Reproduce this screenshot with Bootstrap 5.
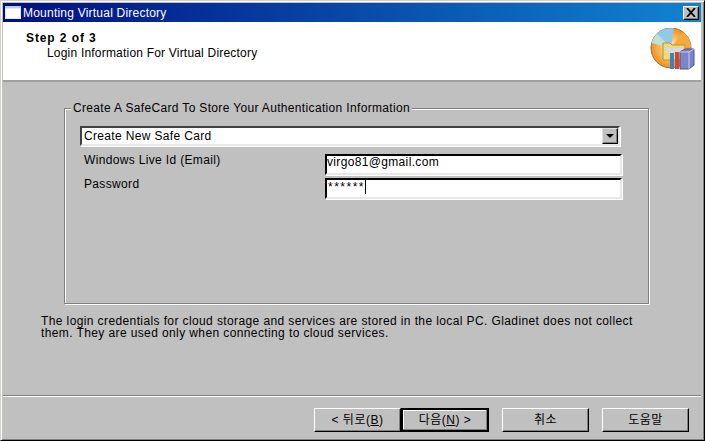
<!DOCTYPE html>
<html lang="en"><head><meta charset="utf-8"><title>Mounting Virtual Directory</title>
<link href="https://cdn.jsdelivr.net/npm/bootstrap@5.3.0/dist/css/bootstrap.min.css" rel="stylesheet">
<style>
html,body{width:705px;height:441px;overflow:hidden;margin:0;background:#c0c0c0}
body{font-family:"Liberation Sans","Noto Sans CJK KR",sans-serif;font-size:12px;color:#000;letter-spacing:.34px;line-height:14px}
.wframe{height:441px;border:1px solid;border-color:#d4d0c8 #000 #000 #d4d0c8;box-shadow:inset 1px 1px 0 #fff,inset -1px -1px 0 #808080;padding:2px 3px 2px 2px}
.wtitle{height:19px;background:linear-gradient(90deg,#000f80,#1084d0);color:#fff;padding:0 2px;flex:none;letter-spacing:.22px}
.wicon{width:16px;height:13px;background:#fff;border-top:2px solid #b8cce8;margin-right:2px;box-shadow:inset 0 0 0 1px #dfe8f5}
.wclose{width:16px;height:14px;background:#c0c0c0;border:1px solid;border-color:#fff #000 #000 #fff;box-shadow:inset -1px -1px 0 #808080}
.whead{height:60px;background:#fff;padding:9px 5px 0 23px;border-bottom:2px solid #a0a0a0;flex:none}
.wstep{font-weight:700;letter-spacing:.9px}
.wsub{padding-left:21px;margin-top:1px;letter-spacing:.2px}
.wlogo{margin-top:-3px}
.wbody{padding:19px 0 0 61px;height:314px;border-bottom:1px solid #808080;box-shadow:0 1px 0 #fff;flex:none}
.gbox{width:585px;height:203px;border:1px solid #808080;box-shadow:inset 1px 1px 0 #fff,1px 1px 0 #fff;padding:11px 28px 0 15px;margin:0;position:relative}
.gbox legend{float:none;width:auto;font-size:12px;line-height:14px;margin:-16px 0 0 -9px;padding:0 2px;background:#c0c0c0;position:relative}
.combo{height:20px;width:540px;background:#fff;border:2px solid;border-color:#404040 #e8e8e8 #e8e8e8 #404040;padding-left:2px;box-shadow:1px 1px 0 #fff}
.cbtn{width:16px;height:16px;background:#c0c0c0;border:1px solid;border-color:#e0e0e0 #000 #000 #e0e0e0;box-shadow:inset -1px -1px 0 #808080}
.cbtn i{border:4px solid transparent;border-top:4px solid #000;border-bottom:0;display:block}
.frow{height:24px;width:542px}
.frow1{margin-top:5px}
.flabel{width:245px;padding-left:4px;padding-top:2px}
.fbox{width:297px;height:21px;background:#fff;border:2px solid;border-color:#000 #e8e8e8 #e8e8e8 #000;box-shadow:1px 1px 0 #fff;padding:0;line-height:13px;margin-top:3px}
.fstars{letter-spacing:1.5px;padding-left:1px}
.caret{display:inline-block;width:1px;height:14px;background:#000;vertical-align:-3px}
.wnote{margin:11px 0 0 -23px;width:620px;line-height:12px;letter-spacing:.39px}
.wfoot{padding:12px 12px 0 0;flex:none}
.wbtn{width:87px;height:24px;background:#c0c0c0;border:1px solid;border-color:#fff #000 #000 #fff;box-shadow:inset -1px -1px 0 #808080;color:#000;letter-spacing:.5px;font-size:12px;line-height:20px;padding:0;text-align:center}
.wbtn.wdef{width:88px;border:2px solid #000;box-shadow:inset -1px -1px 0 #808080,inset 1px 1px 0 #fff;line-height:18px}
.wgap{margin-left:13px}
</style></head>
<body>
<div class="wframe d-flex flex-column">
  <div class="wtitle d-flex align-items-center">
    <span class="wicon"></span><span class="flex-grow-1">Mounting Virtual Directory</span>
    <span class="wclose d-flex align-items-center justify-content-center"><svg width="10" height="9" viewBox="0 0 10 9"><path d="M1 0 9 9M9 0 1 9" stroke="#000" stroke-width="1.800" fill="none"/></svg></span>
  </div>
  <div class="whead d-flex justify-content-between">
    <div><div class="wstep">Step 2 of 3</div><div class="wsub">Login Information For Virtual Directory</div></div>
    <svg width="46" height="44" viewBox="0 0 46 44" class="flex-shrink-0 wlogo">
      <defs><radialGradient id="dg" cx=".5" cy=".5" r=".5"><stop offset=".2" stop-color="#ffe2a0"/><stop offset="1" stop-color="#f58c14"/></radialGradient></defs>
      <circle cx="21" cy="20" r="20" fill="url(#dg)" stroke="#8a7a50"/>
      <path d="M21 20 7 5.500A20 20 0 0 1 24 .5Z" fill="#8fcbe8"/>
      <path d="M21 20 1.500 15A20 20 0 0 1 7 5.500Z" fill="#b9e2d8"/>
      <path d="M21 20 33 4A20 20 0 0 1 41 19Z" fill="#f7ab3c"/>
      <path d="M13 15h7l2 2h13v15H13Z" fill="#f3d77c" stroke="#b09540"/>
      <path d="M16 20h17v5H16Z" fill="#d5dae0"/>
      <path d="M20 25h4v16h-4Z" fill="#2f86c8"/><path d="M25 24h4v17h-4Z" fill="#d8452f"/>
      <path d="M30 24l5-3h9v16l-5 4h-9Z" fill="#7d85c9" stroke="#4a5190"/><path d="M30 24h9l5-3M39 24v17" stroke="#c7cbee" fill="none"/>
    </svg>
  </div>
  <div class="wbody">
    <fieldset class="gbox">
      <legend>Create A SafeCard To Store Your Authentication Information</legend>
      <div class="combo d-flex align-items-center justify-content-between"><span>Create New Safe Card</span><span class="cbtn d-flex align-items-center justify-content-center"><i></i></span></div>
      <div class="frow frow1 d-flex"><span class="flabel">Windows Live Id (Email)</span><span class="fbox">virgo81@gmail.com</span></div>
      <div class="frow d-flex"><span class="flabel">Password</span><span class="fbox"><span class="fstars">******</span><span class="caret"></span></span></div>
    </fieldset>
    <p class="wnote mb-0">The login credentials for cloud storage and services are stored in the local PC. Gladinet does not collect them. They are used only when connecting to cloud services.</p>
  </div>
  <div class="wfoot d-flex justify-content-end">
    <button class="wbtn" type="button">&lt; 뒤로(<u>B</u>)</button>
    <button class="wbtn wdef" type="button">다음(<u>N</u>) &gt;</button>
    <button class="wbtn wgap" type="button">취소</button>
    <button class="wbtn wgap" type="button">도움말</button>
  </div>
</div>
</body></html>
